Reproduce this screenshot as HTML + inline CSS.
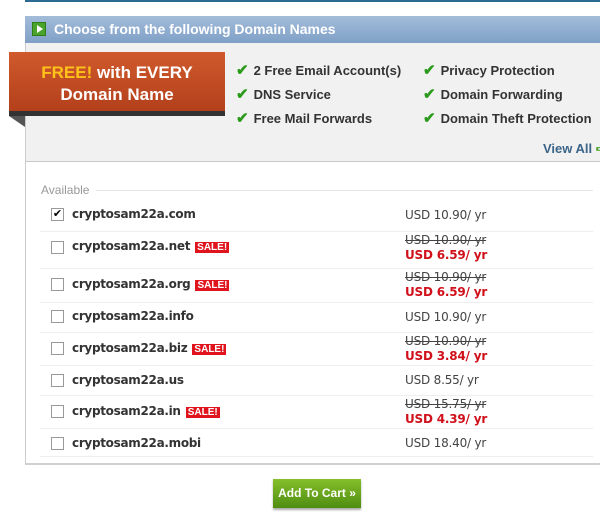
<!DOCTYPE html>
<html><head><style>
*{margin:0;padding:0;box-sizing:border-box}
body{width:600px;height:521px;background:#fff;font-family:"Liberation Sans",sans-serif;position:relative;overflow:hidden}
.abs{position:absolute;white-space:nowrap}
.top{left:25px;top:0;width:575px;height:2px;background:#2b6a93}
.hdr{left:25px;top:16px;width:575px;height:27px;background:linear-gradient(#a3bcd9,#7fa0c7);color:#fff;font-weight:bold;font-size:14px;line-height:27px;padding-left:29px}
.play{left:32px;top:22px;width:14px;height:14px;background:#4aa32a;border:1px solid #2f7d16}
.play:after{content:"";position:absolute;left:4px;top:2px;border-left:6px solid #fff;border-top:4px solid transparent;border-bottom:4px solid transparent}
.gray{left:25px;top:43px;width:575px;height:119px;background:#f1f1f1;border-bottom:1px solid #c8c8c8;border-left:1px solid #ccc}
.rib{left:9px;top:52px;width:216px;height:59px;background:linear-gradient(#d05a2c,#b3401c);color:#fff;font-weight:bold;font-size:17px;text-align:center;line-height:22px;padding-top:10px}
.ribb{left:9px;top:111px;width:216px;height:5px;background:#333}
.tri{left:9px;top:116px;width:0;height:0;border-top:11px solid #555;border-left:16px solid transparent}
.f{font-size:13px;color:#333;font-weight:bold}
.f b{color:#2a9a1a;font-size:15px;margin-right:5px}
.white{left:25px;top:162px;width:575px;height:303px;border-left:1px solid #ccc;border-bottom:2px solid #d0d0d0}
.avail{left:41px;top:183px;font-size:12px;color:#999}
.availl{left:96px;top:190px;width:497px;height:1px;background:#e5e5e5}
.row{left:40px;width:553px;border-top:1px solid #eee}
.cb{position:absolute;left:11px;width:13px;height:13px;border:1px solid #999;background:#fff}
.dn{position:absolute;left:32px;font-weight:bold;color:#333;font-family:"DejaVu Sans",sans-serif;letter-spacing:-0.3px;font-size:12px}
.sale{background:#e0141c;color:#fff;font-size:10px;font-weight:bold;padding:0 2px;margin-left:5px;font-family:"Liberation Sans",sans-serif;letter-spacing:0}
.pr{position:absolute;left:365px;font-size:12px;color:#444;font-family:"DejaVu Sans",sans-serif;line-height:15px;letter-spacing:-0.2px}
.pr s{color:#444}
.pr .red{color:#d0101a;font-weight:bold}
.btn{left:273px;top:479px;width:88px;height:29px;background:linear-gradient(#85bf2a,#4f8d12);color:#fff;font-weight:bold;font-size:12px;text-align:center;line-height:29px;box-shadow:0 2px 2px #aaa}
</style></head><body>
<div class="abs top"></div>
<div class="abs hdr">Choose from the following Domain Names</div>
<div class="abs play"></div>
<div class="abs gray"></div>
<div class="abs rib"><span style="color:#ffc21a">FREE!</span> with EVERY<br>Domain Name</div>
<div class="abs ribb"></div><div class="abs tri"></div>
<div class="abs f" style="left:236px;top:61px"><b>✔</b>2 Free Email Account(s)</div>
<div class="abs f" style="left:236px;top:85px"><b>✔</b>DNS Service</div>
<div class="abs f" style="left:236px;top:109px"><b>✔</b>Free Mail Forwards</div>
<div class="abs f" style="left:423px;top:61px"><b>✔</b>Privacy Protection</div>
<div class="abs f" style="left:423px;top:85px"><b>✔</b>Domain Forwarding</div>
<div class="abs f" style="left:423px;top:109px"><b>✔</b>Domain Theft Protection</div>
<div class="abs f" style="left:543px;top:141px;color:#3a6488;font-size:13px">View All <span style="color:#4aa32a">➪</span></div>
<div class="abs white"></div>
<div class="abs avail">Available</div><div class="abs availl"></div>

<div class="abs row" style="top:200px;height:31px;border-top:none"><div class="cb" style="top:8px;font-size:11px;line-height:10px;text-align:center">✔</div><div class="dn" style="top:7px">cryptosam22a.com</div><div class="pr" style="top:8px">USD 10.90/ yr</div></div>
<div class="abs row" style="top:231px;height:37px"><div class="cb" style="top:9px"></div><div class="dn" style="top:7px">cryptosam22a.net<span class="sale">SALE!</span></div><div class="pr" style="top:1px"><s>USD 10.90/ yr</s><br><span class="red">USD 6.59/ yr</span></div></div>
<div class="abs row" style="top:268px;height:34px"><div class="cb" style="top:9px"></div><div class="dn" style="top:8px">cryptosam22a.org<span class="sale">SALE!</span></div><div class="pr" style="top:1px"><s>USD 10.90/ yr</s><br><span class="red">USD 6.59/ yr</span></div></div>
<div class="abs row" style="top:302px;height:30px"><div class="cb" style="top:7px"></div><div class="dn" style="top:6px">cryptosam22a.info</div><div class="pr" style="top:7px">USD 10.90/ yr</div></div>
<div class="abs row" style="top:332px;height:33px"><div class="cb" style="top:9px"></div><div class="dn" style="top:8px">cryptosam22a.biz<span class="sale">SALE!</span></div><div class="pr" style="top:1px"><s>USD 10.90/ yr</s><br><span class="red">USD 3.84/ yr</span></div></div>
<div class="abs row" style="top:365px;height:30px"><div class="cb" style="top:8px"></div><div class="dn" style="top:7px">cryptosam22a.us</div><div class="pr" style="top:7px">USD 8.55/ yr</div></div>
<div class="abs row" style="top:395px;height:33px"><div class="cb" style="top:9px"></div><div class="dn" style="top:8px">cryptosam22a.in<span class="sale">SALE!</span></div><div class="pr" style="top:1px"><s>USD 15.75/ yr</s><br><span class="red">USD 4.39/ yr</span></div></div>
<div class="abs row" style="top:428px;height:28px"><div class="cb" style="top:8px"></div><div class="dn" style="top:7px">cryptosam22a.mobi</div><div class="pr" style="top:7px">USD 18.40/ yr</div></div>
<div class="abs" style="left:40px;top:456px;width:553px;height:1px;background:#eee"></div>

<div class="abs btn">Add To Cart »</div>
</body></html>
